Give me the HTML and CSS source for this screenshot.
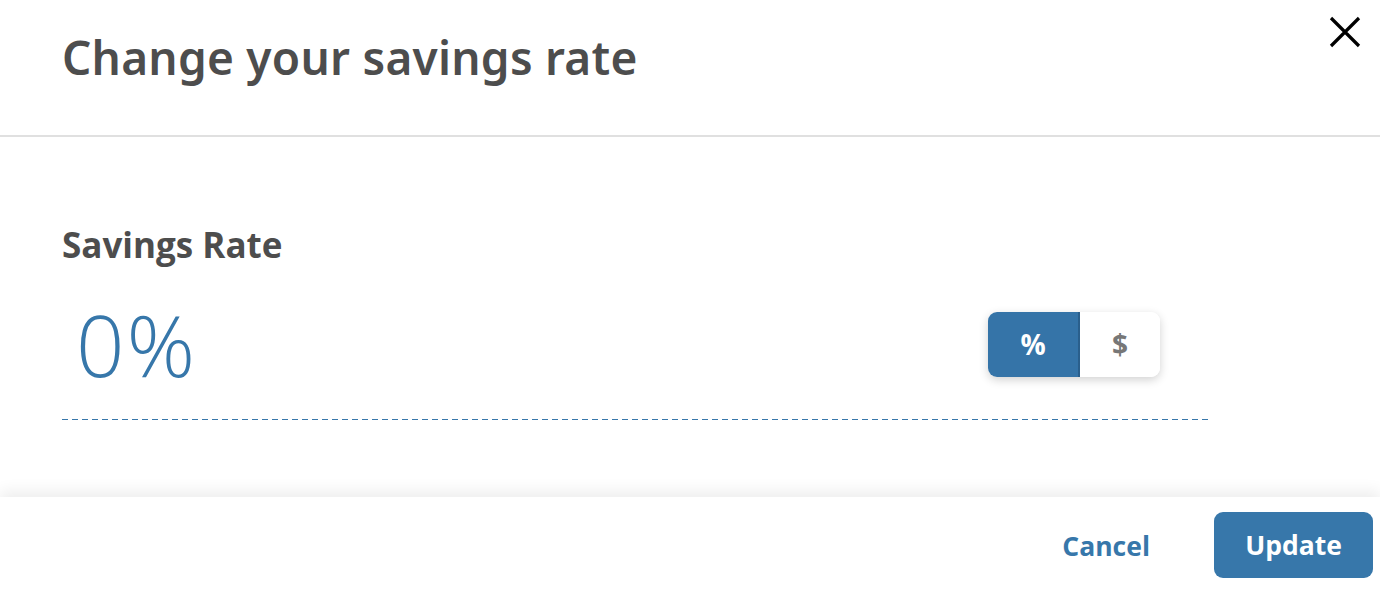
FILE: index.html
```html
<!DOCTYPE html>
<html>
<head>
<meta charset="utf-8">
<link rel="stylesheet" href="styles.css">
</head>
<body>
<div class="modal">
  <header class="modal-header">
    <h1 class="title">Change your savings rate</h1>
    <button class="close" aria-label="Close">
      <svg width="34" height="34" viewBox="0 0 34 34"><path d="M3 3 L31 31 M31 3 L3 31" stroke="#000" stroke-width="3.2" fill="none"/></svg>
    </button>
  </header>
  <main class="modal-body">
    <div class="label">Savings Rate</div>
    <div class="value-row">
      <div class="value">0%</div>
      <div class="toggle">
        <span class="opt active">%</span>
        <span class="opt">$</span>
      </div>
    </div>
    <svg class="dash" width="1148" height="2" viewBox="0 0 1148 2" shape-rendering="crispEdges"><line x1="0" y1="0.5" x2="1148" y2="0.5" stroke="#3777aa" stroke-width="1" stroke-dasharray="6 4"/></svg>
  </main>
  <footer class="modal-footer">
    <button class="cancel">Cancel</button>
    <button class="update">Update</button>
  </footer>
</div>
</body>
</html>
```
FILE: styles.css
```css
html, body { margin: 0; padding: 0; background: #fff; }
body { font-family: "Open Sans", "Lato", sans-serif; width: 1380px; height: 590px; overflow: hidden; }
.modal { display: flex; flex-direction: column; height: 590px; }
.modal-header {
  height: 135px;
  border-bottom: 2px solid #e0e0e0;
  display: flex;
  justify-content: space-between;
  align-items: flex-start;
  padding-left: 62px;
  box-sizing: content-box;
}
.title {
  margin: 0;
  padding-top: 27px;
  font-family: "Noto Sans", sans-serif;
  font-weight: 600;
  font-size: 46px;
  line-height: 60px;
  color: #4d4d4d;
  letter-spacing: 0.25px;
}
.close {
  border: 0; background: none; padding: 0;
  margin: 15px 18px 0 0;
  width: 34px; height: 34px;
  cursor: pointer;
}
.modal-body {
  flex: 1;
  padding: 0 170px 0 62px;
  position: relative;
}
.label {
  margin-top: 86px;
  font-size: 35px;
  font-weight: 700;
  color: #4d4d4d;
  line-height: 44px;
  height: 44px;
}
.value-row {
  display: flex;
  justify-content: space-between;
  align-items: center;
  height: 84px;
  margin-top: 35px;
  padding-left: 14px;
  padding-right: 50px;
}
.value {
  font-size: 85px;
  font-weight: 300;
  color: #3777aa;
  line-height: 84px;
  letter-spacing: 2px;
}
.toggle {
  display: flex;
  border-radius: 9px;
  overflow: hidden;
  box-shadow: 0 3px 10px rgba(0,0,0,0.18);
  height: 65px;
}
.opt {
  width: 80px;
  display: flex; align-items: center; justify-content: center;
  font-size: 28px; font-weight: 700;
  color: #777;
  background: #fff;
}
.opt.active {
  width: 92px;
  background: #3574a8;
  color: #fff;
  border-right: 2px solid #2a5f8c;
  box-sizing: border-box;
}
.dash {
  display: block;
  margin-top: 33px;
}
.modal-footer {
  height: 93px;
  display: flex;
  justify-content: flex-end;
  align-items: center;
  gap: 64px;
  padding-right: 7px;
  position: relative;
  box-shadow: 0 -6px 14px rgba(0,0,0,0.07);
}
.cancel {
  border: 0; background: none; padding: 0;
  font-family: inherit; font-size: 26.5px; font-weight: 700;
  color: #3777aa;
  margin-top: 4px;
}
.update {
  border: 0;
  background: #3777aa;
  color: #fff;
  font-family: inherit; font-size: 26.5px; font-weight: 700;
  width: 159px; height: 66px;
  border-radius: 9px;
  margin-top: 2px;
}
```
